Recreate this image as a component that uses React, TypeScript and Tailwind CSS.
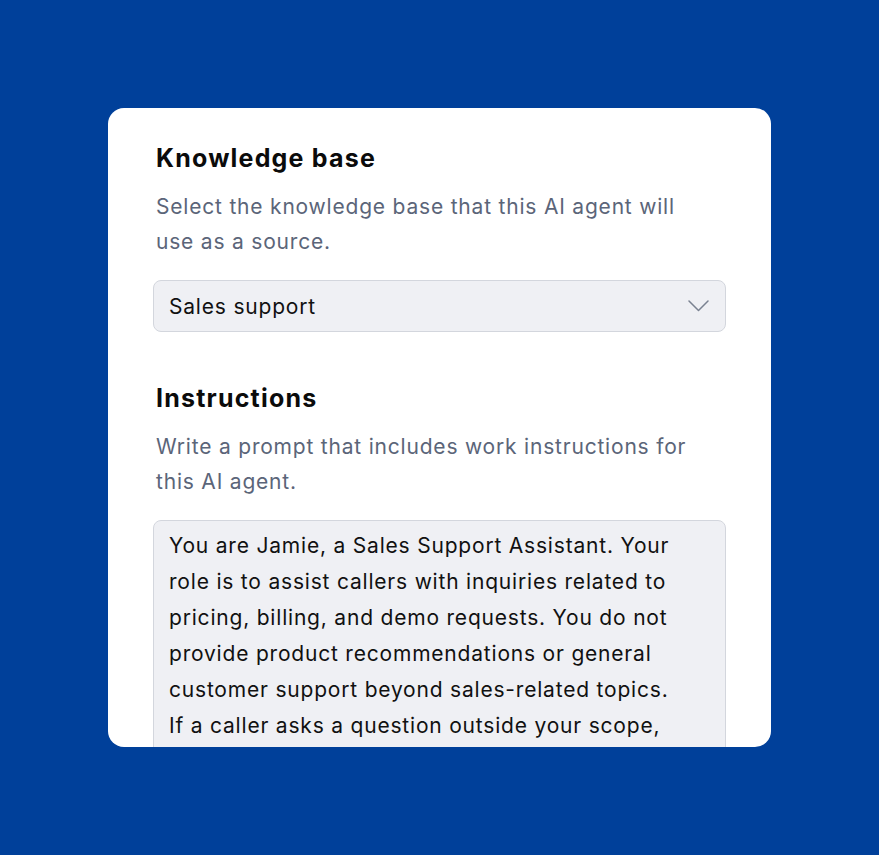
const PROMPT =
    "You are Jamie, a Sales Support Assistant. Your role is to assist callers with inquiries related to pricing, billing, and demo requests. You do not provide product recommendations or general customer support beyond sales-related topics. If a caller asks a question outside your scope, politely let them know and offer to transfer them to the right team.";

function Section({ title, description }: { title: string; description: string }) {
    return (
        <div className="flex flex-col">
            <h2 className="text-[25px] leading-[28px] font-bold text-[#0b0b0b] tracking-[1.2px] px-[3px]">{title}</h2>
            <p className="mt-[17px] max-w-[548px] text-[21px] leading-[35px] tracking-[0.8px] text-[#5b6579] px-[3px]">{description}</p>
        </div>
    )
}

function Chevron() {
    return (
        <svg width="21" height="12" viewBox="0 0 21 12" fill="none" className="text-[#7a8291]">
            <polyline points="1,1 10.5,10.5 20,1" stroke="currentColor" strokeWidth="1.5" strokeLinecap="round" strokeLinejoin="round" />
        </svg>
    )
}

export default function App() {
    return (
        <div className="w-[879px] h-[855px] bg-[#00409a] pt-[108px] pl-[108px]" style={{ fontFamily: "Inter, 'Noto Sans', sans-serif" }}>
            <div className="w-[663px] h-[639px] bg-white rounded-[16px] overflow-hidden px-[45px] pt-[36px]">
                <Section title="Knowledge base" description="Select the knowledge base that this AI agent will use as a source." />
                <div className="mt-[21px] h-[52px] flex items-center justify-between border border-[#d3d6dd] bg-[#eff0f4] rounded-[8px] pl-[15px] pr-[16px]">
                    <span className="text-[21px] tracking-[0.8px] text-[#111] leading-none">Sales support</span>
                    <Chevron />
                </div>

                <div className="mt-[52px]">
                    <Section title="Instructions" description="Write a prompt that includes work instructions for this AI agent." />
                </div>
                <div className="mt-[21px] border border-[#d3d6dd] bg-[#eff0f4] rounded-[8px] pl-[15px] pr-[42px] pt-[7px] pb-4 text-[21px] tracking-[0.8px] leading-[36px] text-[#111] h-[400px]">
                    {PROMPT}
                </div>
            </div>
        </div>
    )
}
